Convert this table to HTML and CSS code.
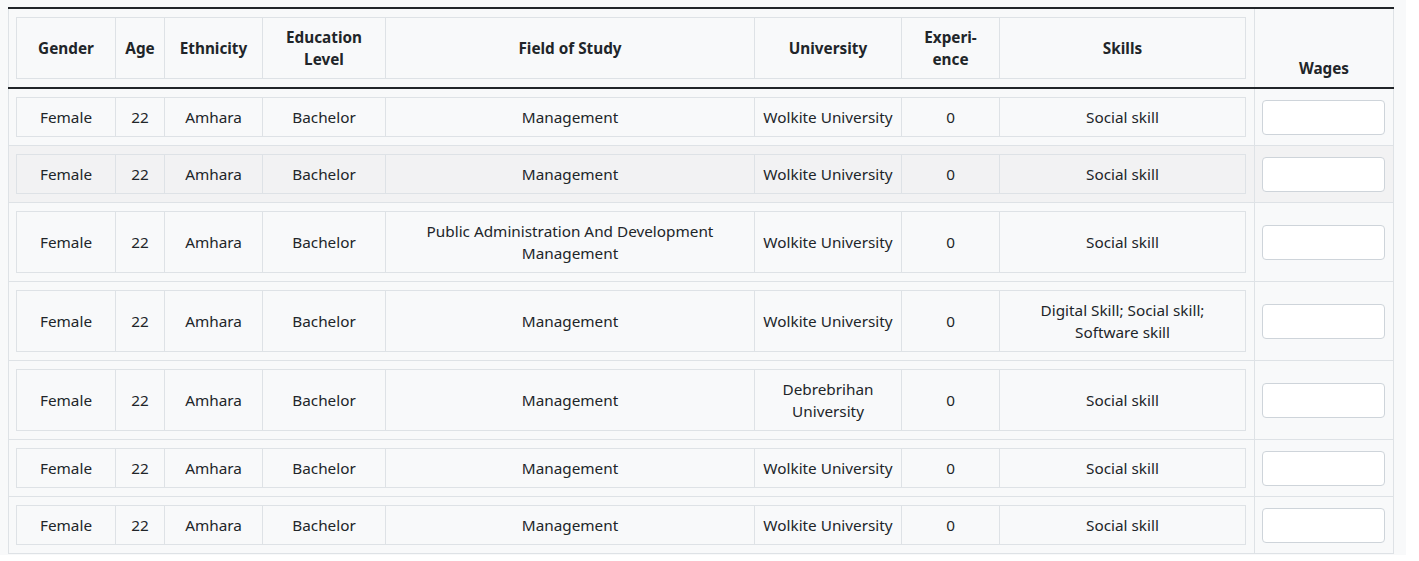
FILE: index.html
```html
<!DOCTYPE html>
<html lang="en">
<head>
<meta charset="utf-8">
<title>Wages</title>
<link rel="stylesheet" href="styles.css">
</head>
<body>
<div class="page">
<table class="outer">
<colgroup><col class="col-main"><col class="col-wages"></colgroup>
<thead>
<tr>
<th class="main-cell">
<table class="inner">
<colgroup><col class="w-gender"><col class="w-age"><col class="w-eth"><col class="w-edu"><col class="w-field"><col class="w-uni"><col class="w-exp"><col class="w-skills"></colgroup>
<tr><th>Gender</th><th>Age</th><th>Ethnicity</th><th>Education Level</th><th>Field of Study</th><th>University</th><th>Experi&shy;ence</th><th>Skills</th></tr>
</table>
</th>
<th class="wages-head">Wages</th>
</tr>
</thead>
<tbody>
<tr>
<td class="main-cell"><table class="inner"><colgroup><col class="w-gender"><col class="w-age"><col class="w-eth"><col class="w-edu"><col class="w-field"><col class="w-uni"><col class="w-exp"><col class="w-skills"></colgroup>
<tr><td>Female</td><td>22</td><td>Amhara</td><td>Bachelor</td><td>Management</td><td>Wolkite University</td><td>0</td><td>Social skill</td></tr></table></td>
<td class="wages-cell"><input class="wage-input" type="text"></td>
</tr>
<tr class="hover">
<td class="main-cell"><table class="inner"><colgroup><col class="w-gender"><col class="w-age"><col class="w-eth"><col class="w-edu"><col class="w-field"><col class="w-uni"><col class="w-exp"><col class="w-skills"></colgroup>
<tr><td>Female</td><td>22</td><td>Amhara</td><td>Bachelor</td><td>Management</td><td>Wolkite University</td><td>0</td><td>Social skill</td></tr></table></td>
<td class="wages-cell"><input class="wage-input" type="text"></td>
</tr>
<tr>
<td class="main-cell"><table class="inner"><colgroup><col class="w-gender"><col class="w-age"><col class="w-eth"><col class="w-edu"><col class="w-field"><col class="w-uni"><col class="w-exp"><col class="w-skills"></colgroup>
<tr><td>Female</td><td>22</td><td>Amhara</td><td>Bachelor</td><td>Public Administration And Development Management</td><td>Wolkite University</td><td>0</td><td>Social skill</td></tr></table></td>
<td class="wages-cell"><input class="wage-input" type="text"></td>
</tr>
<tr>
<td class="main-cell"><table class="inner"><colgroup><col class="w-gender"><col class="w-age"><col class="w-eth"><col class="w-edu"><col class="w-field"><col class="w-uni"><col class="w-exp"><col class="w-skills"></colgroup>
<tr><td>Female</td><td>22</td><td>Amhara</td><td>Bachelor</td><td>Management</td><td>Wolkite University</td><td>0</td><td>Digital Skill; Social skill; Software skill</td></tr></table></td>
<td class="wages-cell"><input class="wage-input" type="text"></td>
</tr>
<tr>
<td class="main-cell"><table class="inner"><colgroup><col class="w-gender"><col class="w-age"><col class="w-eth"><col class="w-edu"><col class="w-field"><col class="w-uni"><col class="w-exp"><col class="w-skills"></colgroup>
<tr><td>Female</td><td>22</td><td>Amhara</td><td>Bachelor</td><td>Management</td><td>Debrebrihan University</td><td>0</td><td>Social skill</td></tr></table></td>
<td class="wages-cell"><input class="wage-input" type="text"></td>
</tr>
<tr>
<td class="main-cell"><table class="inner"><colgroup><col class="w-gender"><col class="w-age"><col class="w-eth"><col class="w-edu"><col class="w-field"><col class="w-uni"><col class="w-exp"><col class="w-skills"></colgroup>
<tr><td>Female</td><td>22</td><td>Amhara</td><td>Bachelor</td><td>Management</td><td>Wolkite University</td><td>0</td><td>Social skill</td></tr></table></td>
<td class="wages-cell"><input class="wage-input" type="text"></td>
</tr>
<tr>
<td class="main-cell"><table class="inner"><colgroup><col class="w-gender"><col class="w-age"><col class="w-eth"><col class="w-edu"><col class="w-field"><col class="w-uni"><col class="w-exp"><col class="w-skills"></colgroup>
<tr><td>Female</td><td>22</td><td>Amhara</td><td>Bachelor</td><td>Management</td><td>Wolkite University</td><td>0</td><td>Social skill</td></tr></table></td>
<td class="wages-cell"><input class="wage-input" type="text"></td>
</tr>
</tbody>
</table>
</div>
</body>
</html>
```

FILE: styles.css
```css
html, body {
  margin: 0;
  padding: 0;
  background: #ffffff;
}

body {
  font-family: "Noto Sans", "Open Sans", sans-serif;
  font-size: 15.3px;
  line-height: 22px;
  color: #212529;
}

.page {
  background: #f8f9fa;
  width: 1406px;
  box-sizing: border-box;
  padding: 7px 13px 1px 8px;
}

.outer {
  border-collapse: collapse;
  table-layout: fixed;
  width: 1385px;
}

.col-main { width: 1246px; }
.col-wages { width: 139px; }

.outer > thead > tr > th,
.outer > tbody > tr > td {
  padding: 8px;
  border: 1px solid #dee2e6;
}

.outer > thead > tr > th.main-cell,
.outer > tbody > tr > td.main-cell {
  padding-left: 7px;
  padding-right: 8px;
}

.outer > tbody > tr > td.wages-cell {
  padding-left: 7px;
}

.outer > thead > tr > th {
  border-top: 2px solid #212529;
}

.outer > tbody {
  border-top: 2px solid #212529;
}

.outer > thead > tr > th.wages-head {
  vertical-align: bottom;
  text-align: center;
  font-weight: 700;
}

.wages-cell {
  vertical-align: middle;
}

.outer > tbody > tr.hover > td {
  background: #f2f2f3;
}

.inner {
  border-collapse: collapse;
  table-layout: fixed;
  width: 100%;
}

.inner th,
.inner td {
  padding: 8px;
  border: 1px solid #dee2e6;
  text-align: center;
  vertical-align: middle;
}

.inner th {
  font-weight: 700;
  hyphens: manual;
}

.w-gender { width: 99px; }
.w-age { width: 49px; }
.w-eth { width: 98px; }
.w-edu { width: 123px; }
.w-field { width: 369px; }
.w-uni { width: 147px; }
.w-exp { width: 98px; }
.w-skills { width: 246px; }

.wage-input {
  display: block;
  box-sizing: border-box;
  width: 123px;
  height: 35px;
  margin: 0;
  padding: 6px 12px;
  border: 1px solid #ced4da;
  border-radius: 4px;
  background: #ffffff;
  font: inherit;
}
```
